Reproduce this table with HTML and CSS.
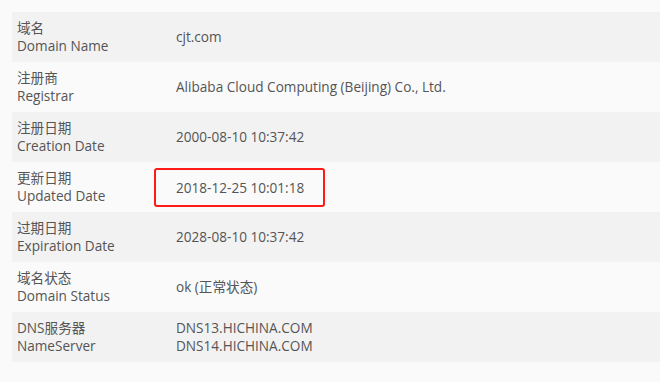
FILE: index.html
```html
<!DOCTYPE html>
<html>
<head>
<meta charset="utf-8">
<link rel="stylesheet" href="styles.css">
</head>
<body>
<div class="table">
  <div class="row">
    <div class="label"><div>域名</div><div>Domain Name</div></div>
    <div class="value">cjt.com</div>
  </div>
  <div class="row">
    <div class="label"><div>注册商</div><div>Registrar</div></div>
    <div class="value">Alibaba Cloud Computing (Beijing) Co., Ltd.</div>
  </div>
  <div class="row">
    <div class="label"><div>注册日期</div><div>Creation Date</div></div>
    <div class="value">2000-08-10 10:37:42</div>
  </div>
  <div class="row">
    <div class="label"><div>更新日期</div><div>Updated Date</div></div>
    <div class="value"><span class="mark">2018-12-25 10:01:18</span></div>
  </div>
  <div class="row">
    <div class="label"><div>过期日期</div><div>Expiration Date</div></div>
    <div class="value">2028-08-10 10:37:42</div>
  </div>
  <div class="row">
    <div class="label"><div>域名状态</div><div>Domain Status</div></div>
    <div class="value">ok (正常状态)</div>
  </div>
  <div class="row">
    <div class="label"><div>DNS服务器</div><div>NameServer</div></div>
    <div class="value"><div>DNS13.HICHINA.COM</div><div>DNS14.HICHINA.COM</div></div>
  </div>
</div>
</body>
</html>
```
FILE: styles.css
```css
html, body {
  margin: 0;
  padding: 0;
  background: #fafafa;
}
body {
  font-family: "Open Sans", "Noto Sans CJK SC", sans-serif;
  font-size: 13.6px;
  color: #555;
  padding: 12px 0 0 12px;
}
.table {
  display: flex;
  flex-direction: column;
}
.row {
  display: flex;
  align-items: center;
  height: 50px;
  padding: 0 5px;
  line-height: 18px;
  background: #fafafa;
}
.row:nth-child(odd) {
  background: #f2f2f2;
}
.label {
  width: 159px;
  flex: none;
}
.value {
  flex: 1;
}
.mark {
  display: inline-block;
  border: 2px solid #ff1a1a;
  border-radius: 3px;
  padding: 9px 19px 8px 20px;
  margin-left: -22px;
}
```
